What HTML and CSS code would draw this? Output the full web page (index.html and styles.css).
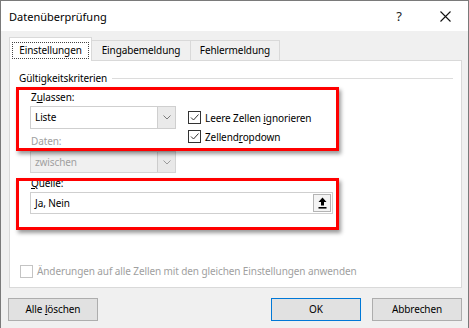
FILE: index.html
```html
<!DOCTYPE html>
<html lang="de">
<head>
    <meta charset="UTF-8">
    <meta name="viewport" content="width=device-width, initial-scale=1.0">
    <title>Datenüberprüfung</title>
    <link rel="stylesheet" href="styles.css">
</head>
<body>
    <div class="window">
        <div class="titlebar">
            <div class="title">Datenüberprüfung</div>
            <div class="title_btn help">?</div>
            <div class="title_btn close">
                <svg width="11" height="11" viewBox="0 0 11 11"><path d="M0.5 0.5 L10.5 10.5 M10.5 0.5 L0.5 10.5" stroke="#111" stroke-width="1.1" fill="none"/></svg>
            </div>
        </div>
        <div class="content">
            <div class="tabs">
                <div class="tab active"><span class="focus">Einstellungen</span></div>
                <div class="tab tab_input">Eingabemeldung</div>
                <div class="tab tab_error">Fehlermeldung</div>
            </div>
            <div class="panel">
                <div class="group_title"><span>Gültigkeitskriterien</span><div class="group_line"></div></div>
                <div class="criteria">
                    <div class="col_left">
                        <div class="label">Z<u>u</u>lassen:</div>
                        <div class="combo">
                            <div class="combo_text">Liste</div>
                            <div class="combo_arrow"><svg width="8" height="5" viewBox="0 0 8 5"><path d="M0.5 0.5 L4 4 L7.5 0.5" stroke="#7a7a7a" fill="none"/></svg></div>
                        </div>
                        <div class="label disabled label_data">Daten:</div>
                        <div class="combo combo_off">
                            <div class="combo_text">zwischen</div>
                            <div class="combo_arrow"><svg width="8" height="5" viewBox="0 0 8 5"><path d="M0.5 0.5 L4 4 L7.5 0.5" stroke="#9a9a9a" fill="none"/></svg></div>
                        </div>
                    </div>
                    <div class="col_right">
                        <div class="check_row">
                            <div class="check"><svg width="11" height="11" viewBox="0 0 11 11"><path d="M2 5.5 L4.5 8 L9.5 2.5" stroke="#333" fill="none"/></svg></div>
                            <span>Leere Zellen <u>i</u>gnorieren</span>
                        </div>
                        <div class="check_row">
                            <div class="check"><svg width="11" height="11" viewBox="0 0 11 11"><path d="M2 5.5 L4.5 8 L9.5 2.5" stroke="#333" fill="none"/></svg></div>
                            <span>Zellend<u>r</u>opdown</span>
                        </div>
                    </div>
                </div>
                <div class="label label_source"><u>Q</u>uelle:</div>
                <div class="source">
                    <div class="source_text">Ja, Nein</div>
                    <div class="ref_btn">
                        <svg width="9" height="12" viewBox="0 0 9 12"><path d="M4.5 0.5 L8.5 5 L6 5 L6 8.5 L3 8.5 L3 5 L0.5 5 Z" fill="#000"/><rect x="0.5" y="10" width="8" height="1.6" fill="#000"/></svg>
                    </div>
                </div>
                <div class="apply_all">
                    <div class="check check_off"></div>
                    <span>Änderungen auf alle Zellen mit den gleichen Einstellungen anwenden</span>
                </div>
            </div>
            <div class="buttons">
                <div class="btn btn_clear">Alle <u>l</u>öschen</div>
                <div class="btn btn_ok">OK</div>
                <div class="btn btn_cancel">Abbrechen</div>
            </div>
        </div>
        <!-- annotation frames drawn over the dialog -->
        <div class="mark mark_allow"></div>
        <div class="mark mark_source"></div>
    </div>
</body>
</html>
```

FILE: styles.css
```css
body
{
    margin: 0;
    background-color: #fff;
    font-family: "Noto Sans", "Open Sans", sans-serif;
    font-size: 10px;
    letter-spacing: -0.1px;
    color: #000;
}
u
{
    text-underline-offset: 1px;
}
.window
{
    position: relative;
    width: 469px;
    height: 328px;
    box-sizing: border-box;
    border: 1px solid #7a7a7a;
    border-bottom: none;
    background-color: #f0f0f0;
    overflow: hidden;
}
.titlebar
{
    height: 30px;
    background-color: #fff;
    display: flex;
    align-items: center;
    padding-left: 8px;
}
.title
{
    flex: 1;
    font-size: 11px;
    letter-spacing: 0;
    padding-top: 1px;
}
.title_btn
{
    width: 46px;
    height: 30px;
    display: flex;
    align-items: center;
    justify-content: center;
}
.help
{
    font-size: 13px;
    color: #222;
}
.content
{
    padding: 6px 6px 0 8px;
}
.tabs
{
    display: flex;
    align-items: flex-end;
    height: 23px;
}
.tab
{
    box-sizing: border-box;
    height: 20px;
    border: 1px solid #d9d9d9;
    border-bottom: none;
    background-color: #f0f0f0;
    text-align: center;
    line-height: 18px;
}
.tab.active
{
    position: relative;
    z-index: 1;
    width: 83px;
    height: 24px;
    margin-bottom: -1px;
    background-color: #fff;
    padding: 4px 2px 0 2px;
}
.focus
{
    display: block;
    box-sizing: border-box;
    height: 17px;
    line-height: 15px;
    border: 1px dotted #444;
}
.tab_input
{
    width: 100px;
    margin-left: -1px;
}
.tab_error
{
    width: 90px;
    margin-left: -1px;
}
.panel
{
    box-sizing: border-box;
    height: 228px;
    background-color: #fff;
    border: 1px solid #d9d9d9;
    padding: 10px 8px 0 9px;
}
.group_title
{
    display: flex;
    align-items: center;
    height: 14px;
    line-height: 14px;
}
.group_line
{
    flex: 1;
    height: 1px;
    margin-left: 5px;
    background-color: #dcdcdc;
}
.criteria
{
    display: flex;
    margin: 5px 0 0 11px;
}
.col_left
{
    width: 146px;
}
.label
{
    height: 14px;
    line-height: 14px;
    padding-left: 1px;
}
.disabled
{
    color: #a0a0a0;
}
.label_data
{
    margin-top: 5px;
}
.combo
{
    display: flex;
    box-sizing: border-box;
    height: 23px;
    margin-top: 2px;
    border: 1px solid #cfcfcf;
    background-color: #fff;
}
.combo_text
{
    flex: 1;
    padding-left: 4px;
    line-height: 21px;
}
.combo_arrow
{
    width: 17px;
    display: flex;
    align-items: center;
    justify-content: center;
    background-color: #eaeaea;
    border-left: 1px solid #cfcfcf;
}
.combo_off
{
    height: 22px;
    margin-top: 3px;
    background-color: #f0f0f0;
    border-color: #d4d4d4;
    color: #a0a0a0;
}
.combo_off .combo_text
{
    line-height: 20px;
}
.combo_off .combo_arrow
{
    background-color: #e8e8e8;
    border-left-color: #cccccc;
}
.col_right
{
    margin-left: 12px;
    padding-top: 18px;
}
.check_row
{
    display: flex;
    align-items: center;
    height: 19px;
}
.check
{
    box-sizing: border-box;
    width: 13px;
    height: 13px;
    border: 1px solid #333;
    background-color: #fff;
    margin-right: 4px;
}
.check svg
{
    display: block;
}
.check_off
{
    border-color: #c4c4c4;
}
.label_source
{
    margin: 3px 0 0 11px;
}
.source
{
    display: flex;
    box-sizing: border-box;
    width: 303px;
    height: 22px;
    margin: 2px 0 0 11px;
    border: 1px solid #cfcfcf;
    padding: 1px;
}
.source_text
{
    flex: 1;
    padding-left: 3px;
    line-height: 18px;
}
.ref_btn
{
    box-sizing: border-box;
    width: 18px;
    border: 1px solid #b4b4b4;
    background-color: #f4f4f4;
    display: flex;
    align-items: center;
    justify-content: center;
}
.apply_all
{
    display: flex;
    align-items: center;
    height: 14px;
    margin: 50px 0 0 1px;
    color: #a0a0a0;
}
.buttons
{
    display: flex;
    margin-top: 10px;
}
.btn
{
    box-sizing: border-box;
    width: 90px;
    height: 23px;
    line-height: 21px;
    text-align: center;
    background-color: #e1e1e1;
    border: 1px solid #adadad;
}
.btn_clear
{
    margin-left: -1px;
}
.btn_ok
{
    margin-left: auto;
    border-color: #0078d7;
}
.btn_cancel
{
    margin-left: 11px;
}
.mark
{
    position: absolute;
    left: 15px;
    width: 323px;
    box-sizing: border-box;
    border: 3px solid #f00;
    box-shadow: 2px 3px 4px rgba(0, 0, 0, 0.4);
}
.mark_allow
{
    top: 86px;
    height: 64px;
}
.mark_source
{
    top: 177px;
    height: 52px;
}
```
